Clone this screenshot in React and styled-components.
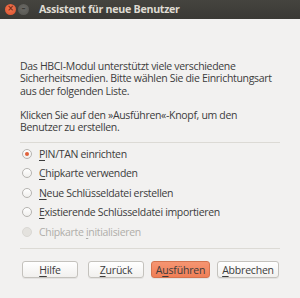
import React, { useState } from 'react';
import styled, { createGlobalStyle } from 'styled-components';

const GlobalStyle = createGlobalStyle`
  html, body {
    margin: 0;
    padding: 0;
    background: #f2f1f0;
  }
`;

const Dialog = styled.div`
  width: 300px;
  height: 298px;
  background: #f2f1f0;
  font-family: "Open Sans", "DejaVu Sans", sans-serif;
  font-size: 10.5px;
  letter-spacing: -0.32px;
  color: #3c3c3c;
  display: flex;
  flex-direction: column;
  overflow: hidden;
`;

const TitleBar = styled.div`
  height: 20px;
  background: linear-gradient(#45443f, #3a3935);
  display: flex;
  align-items: center;
  padding-left: 5px;
  gap: 2px;
`;

const WinButton = styled.div`
  width: 11px;
  height: 11px;
  border-radius: 50%;
  background: ${(p) => (p.$close ? 'radial-gradient(circle at 50% 40%, #f37a55, #d94f2b)' : 'radial-gradient(circle at 50% 40%, #6b6a66, #55544f)')};
  display: flex;
  align-items: center;
  justify-content: center;
  color: ${(p) => (p.$close ? '#7a2a14' : '#3a3935')};
  font-size: 8px;
  line-height: 1;
  font-family: "DejaVu Sans", sans-serif;
  font-weight: bold;
  letter-spacing: 0;
`;

const Title = styled.div`
  margin-left: 8px;
  color: #dfdbd2;
  font-weight: bold;
  font-size: 10.7px;
  letter-spacing: -0.3px;
`;

const Body = styled.div`
  flex: 1;
  padding: 41px 20px 0 20px;
  display: flex;
  flex-direction: column;
`;

const Paragraph = styled.p`
  margin: 0 0 ${(p) => p.$gap}px 0;
  line-height: 12.6px;
  white-space: nowrap;
`;

const Separator = styled.div`
  height: 1px;
  background: #dcdad5;
  margin: ${(p) => p.$margin};
`;

const RadioList = styled.div`
  display: flex;
  flex-direction: column;
  padding-left: 2px;
`;

const RadioRow = styled.label`
  display: flex;
  align-items: center;
  height: 19.5px;
  gap: 7px;
  color: ${(p) => (p.$disabled ? '#b0aeaa' : '#3c3c3c')};
`;

const RadioCircle = styled.span`
  width: 10px;
  height: 10px;
  border-radius: 50%;
  box-sizing: border-box;
  border: 1px solid ${(p) => (p.$disabled ? '#dad8d4' : '#b6b4b0')};
  background: ${(p) => (p.$disabled ? '#e4e2de' : 'linear-gradient(#ffffff, #f0efed)')};
  display: flex;
  align-items: center;
  justify-content: center;
  &::after {
    content: '';
    width: 4px;
    height: 4px;
    border-radius: 50%;
    background: #e0613a;
    display: ${(p) => (p.$checked ? 'block' : 'none')};
  }
`;

const Mnemonic = styled.span`
  text-decoration: underline;
  text-underline-offset: 2px;
`;

const ButtonRow = styled.div`
  display: flex;
  padding: 0 21px 0 22px;
  margin-top: 12px;
  gap: 7px;
`;

const Button = styled.button`
  height: 17px;
  width: ${(p) => p.$w}px;
  margin-right: ${(p) => p.$mr || 0}px;
  padding: 0;
  font-family: inherit;
  font-size: 10.5px;
  letter-spacing: -0.2px;
  color: #3c3c3c;
  border-radius: 3px;
  border: 1px solid ${(p) => (p.$primary ? '#d4744f' : '#c4c2bd')};
  background: ${(p) => (p.$primary ? 'linear-gradient(#f69572, #ef7f57)' : 'linear-gradient(#ffffff, #f1f0ee)')};
  box-shadow: 0 1px 0 rgba(0, 0, 0, 0.06);
  display: flex;
  align-items: center;
  justify-content: center;
`;

const Spacer = styled.div`
  flex: 1;
`;

const options = [
  { pre: '', mn: 'P', post: 'IN/TAN einrichten' },
  { pre: '', mn: 'C', post: 'hipkarte verwenden' },
  { pre: '', mn: 'N', post: 'eue Schlüsseldatei erstellen' },
  { pre: '', mn: 'E', post: 'xistierende Schlüsseldatei importieren' },
  { pre: 'Chipkarte ', mn: 'i', post: 'nitialisieren', disabled: true },
];

const App = () => {
  const [selected, setSelected] = useState(0);

  return (
    <Dialog>
      <GlobalStyle />
      <TitleBar>
        <WinButton $close>×</WinButton>
        <WinButton>–</WinButton>
        <Title>Assistent für neue Benutzer</Title>
      </TitleBar>
      <Body>
        <Paragraph $gap={11}>
          Das HBCI-Modul unterstützt viele verschiedene
          <br />
          Sicherheitsmedien. Bitte wählen Sie die Einrichtungsart
          <br />
          aus der folgenden Liste.
        </Paragraph>
        <Paragraph $gap={8}>
          Klicken Sie auf den »Ausführen«-Knopf, um den
          <br />
          Benutzer zu erstellen.
        </Paragraph>
        <Separator $margin="0 0 1px 0" />
        <RadioList>
          {options.map((o, i) => (
            <RadioRow
              key={i}
              $disabled={o.disabled}
              onClick={() => !o.disabled && setSelected(i)}
            >
              <RadioCircle $checked={selected === i} $disabled={o.disabled} />
              <span>
                {o.pre}
                <Mnemonic>{o.mn}</Mnemonic>
                {o.post}
              </span>
            </RadioRow>
          ))}
        </RadioList>
        <Separator $margin="7px 0 0 0" />
        <Spacer />
      </Body>
      <ButtonRow>
        <Button $w={56} $mr={3}><Mnemonic>H</Mnemonic>ilfe</Button>
        <Button $w={56}><Mnemonic>Z</Mnemonic>urück</Button>
        <Button $w={59} $primary>A<Mnemonic>u</Mnemonic>sführen</Button>
        <Button $w={62}><Mnemonic>A</Mnemonic>bbrechen</Button>
      </ButtonRow>
      <div style={{ height: 21 }} />
    </Dialog>
  );
};

export default App;
